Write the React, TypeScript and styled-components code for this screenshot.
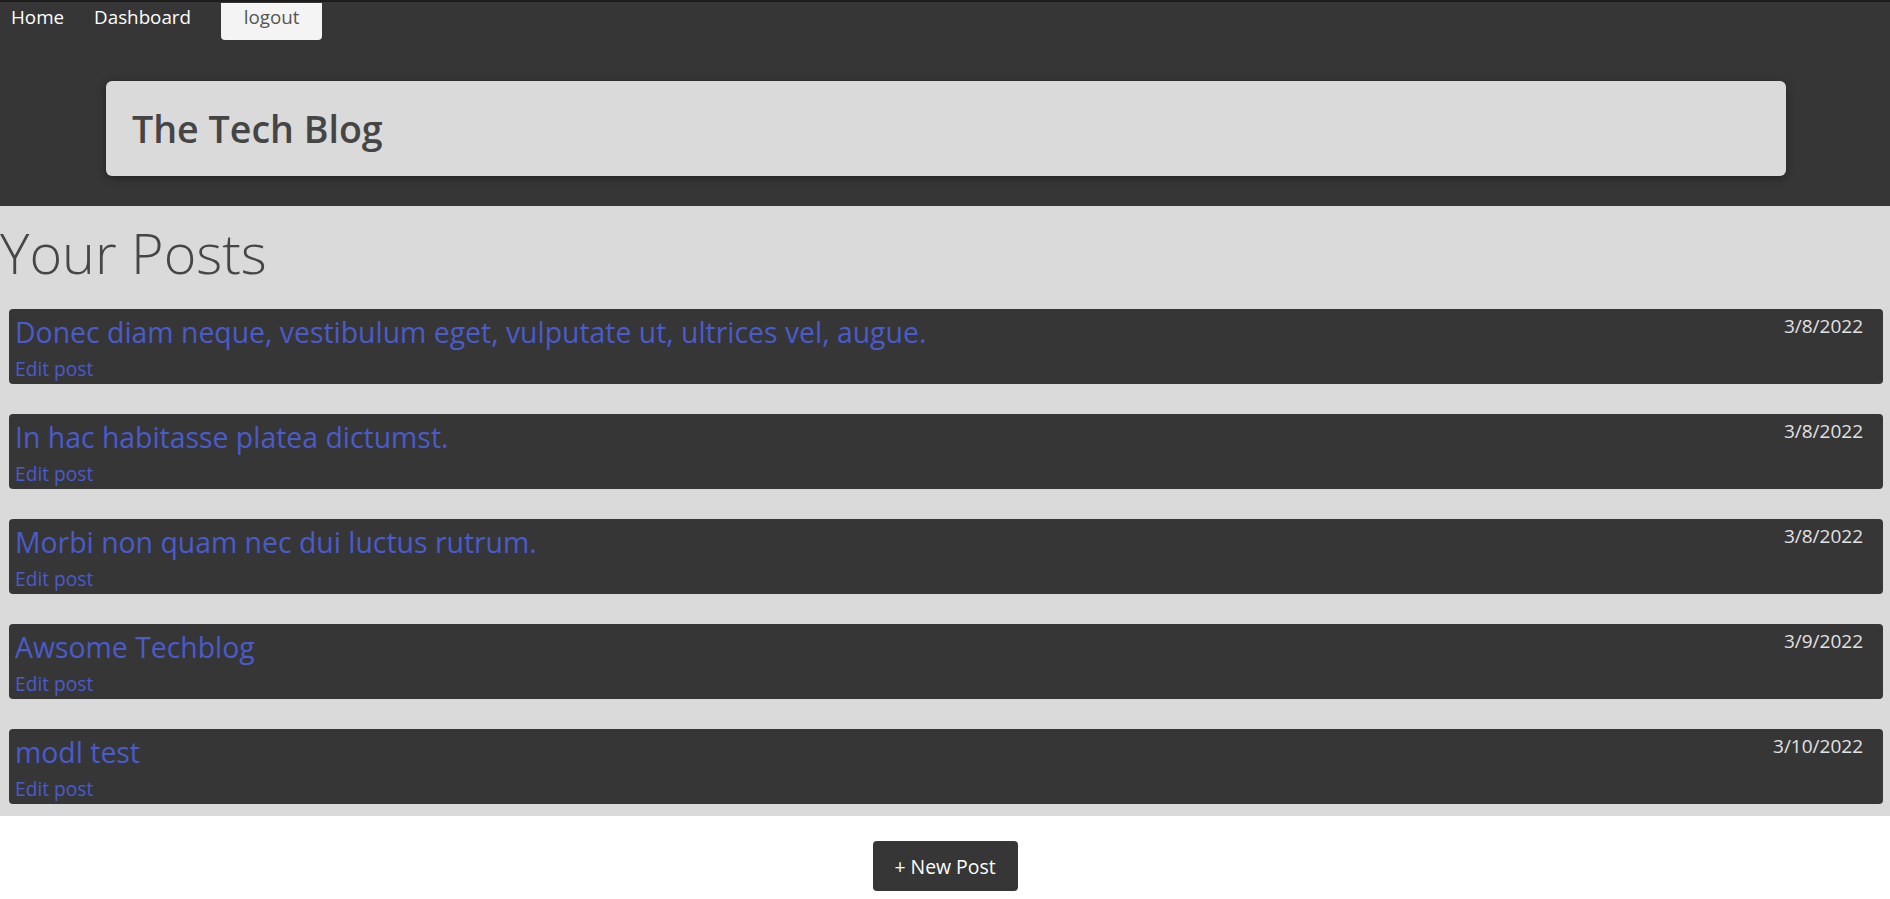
import React from "react";
import styled, { createGlobalStyle } from "styled-components";

const GlobalStyle = createGlobalStyle`
  html, body { margin: 0; padding: 0; background: #ffffff; }
  body { font-family: "Open Sans", "Noto Sans", sans-serif; }
  * { box-sizing: border-box; }
`;

const Header = styled.header`
  background: #363636;
  border-top: 2px solid #1c1c1c;
  padding-bottom: 30px;
`;

const Nav = styled.nav`
  display: flex;
  align-items: flex-start;
  height: 39px;
  padding-left: 11px;
`;

const NavLink = styled.a`
  color: #ffffff;
  font-size: 18.8px;
  line-height: 24px;
  padding-top: 3px;
  margin-right: 30px;
  text-decoration: none;
  cursor: pointer;
`;

const LogoutButton = styled.button`
  background: #f4f4f4;
  color: #555555;
  border: none;
  border-radius: 0 0 4px 4px;
  font-family: inherit;
  font-size: 18.8px;
  width: 101px;
  height: 37px;
  margin-top: 1px;
  padding: 0 0 10px 0;
  cursor: pointer;
`;

const Jumbotron = styled.div`
  margin: 40px 104px 0 106px;
  height: 95px;
  background: #dadada;
  border-radius: 6px;
  box-shadow: 0 2px 8px rgba(0, 0, 0, 0.35);
  display: flex;
  align-items: center;
  padding-left: 26px;
`;

const SiteTitle = styled.h1`
  margin: 0;
  font-size: 37.6px;
  font-weight: 600;
  color: #454545;
`;

const Main = styled.main`
  background: #dadada;
  padding: 7px 7px 12px 9px;
`;

const PageTitle = styled.h2`
  margin: 0 0 18px -9px;
  font-size: 55.7px;
  font-weight: 300;
  line-height: 78px;
  color: #464646;
`;

const PostList = styled.div`
  display: flex;
  flex-direction: column;
  gap: 30px;
`;

const PostCard = styled.article`
  background: #363636;
  border-radius: 4px;
  height: 75px;
  padding: 2px 20px 0 6px;
  display: flex;
  flex-direction: column;
`;

const PostTop = styled.div`
  display: flex;
  justify-content: space-between;
  align-items: flex-start;
`;

const PostTitle = styled.a`
  color: #4a5bcc;
  font-size: 28.4px;
  line-height: 42px;
  text-decoration: none;
  cursor: pointer;
`;

const PostDate = styled.span`
  color: #e2e2e2;
  font-size: 19px;
  line-height: 24px;
  padding-top: 3px;
`;

const EditLink = styled.a`
  color: #4a5bcc;
  font-size: 19.2px;
  line-height: 26px;
  margin-top: 3px;
  text-decoration: none;
  cursor: pointer;
  align-self: flex-start;
`;

const Footer = styled.div`
  display: flex;
  justify-content: center;
  padding-top: 25px;
`;

const NewPostButton = styled.button`
  background: #363636;
  color: #ffffff;
  border: none;
  border-radius: 4px;
  width: 145px;
  height: 50px;
  font-family: inherit;
  font-size: 19.4px;
  cursor: pointer;
`;

const posts = [
  { title: "Donec diam neque, vestibulum eget, vulputate ut, ultrices vel, augue.", date: "3/8/2022" },
  { title: "In hac habitasse platea dictumst.", date: "3/8/2022" },
  { title: "Morbi non quam nec dui luctus rutrum.", date: "3/8/2022" },
  { title: "Awsome Techblog", date: "3/9/2022" },
  { title: "modl test", date: "3/10/2022" },
];

export default function App() {
  return (
    <>
      <GlobalStyle />
      <Header>
        <Nav>
          <NavLink>Home</NavLink>
          <NavLink>Dashboard</NavLink>
          <LogoutButton>logout</LogoutButton>
        </Nav>
        <Jumbotron>
          <SiteTitle>The Tech Blog</SiteTitle>
        </Jumbotron>
      </Header>
      <Main>
        <PageTitle>Your Posts</PageTitle>
        <PostList>
          {posts.map((p) => (
            <PostCard key={p.title}>
              <PostTop>
                <PostTitle>{p.title}</PostTitle>
                <PostDate>{p.date}</PostDate>
              </PostTop>
              <EditLink>Edit post</EditLink>
            </PostCard>
          ))}
        </PostList>
      </Main>
      <Footer>
        <NewPostButton>+ New Post</NewPostButton>
      </Footer>
    </>
  );
}
